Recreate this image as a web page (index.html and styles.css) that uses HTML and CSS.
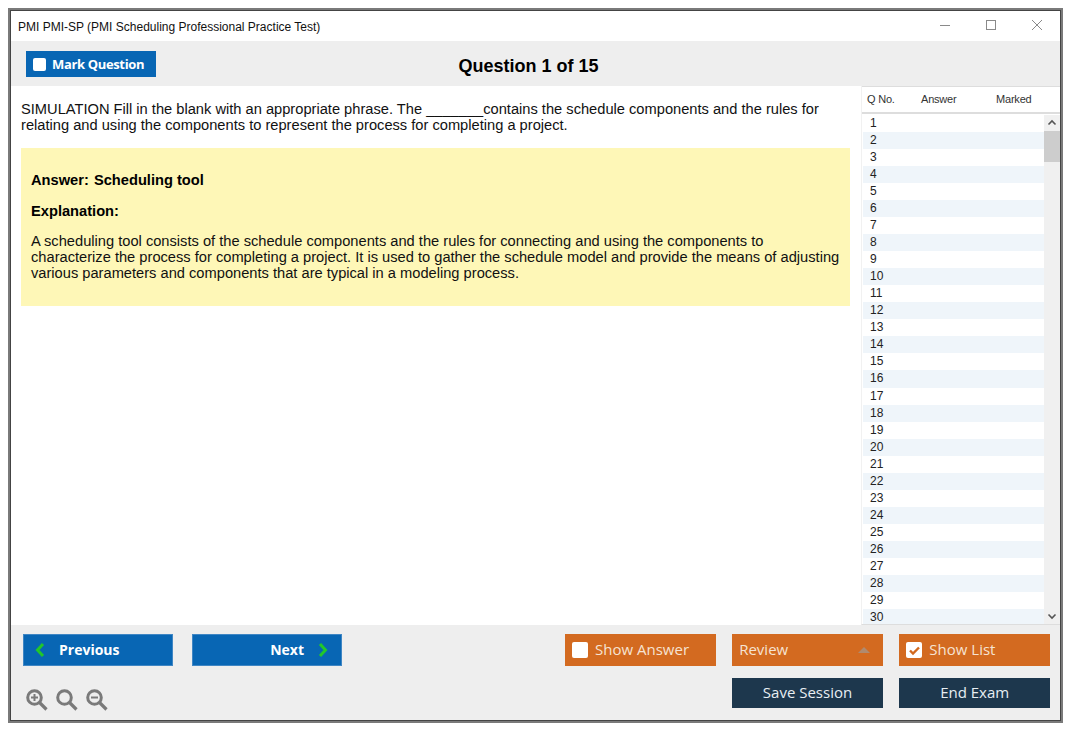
FILE: index.html
```html
<!DOCTYPE html>
<html lang="en">
<head>
<meta charset="utf-8">
<title>PMI PMI-SP</title>
<link rel="stylesheet" href="styles.css">
</head>
<body>
<div class="window">
  <header class="titlebar">
    <span class="title">PMI PMI-SP (PMI Scheduling Professional Practice Test)</span>
    <div class="controls">
      <svg class="ctl" width="12" height="12" viewBox="0 0 12 12"><path d="M1 6.5h10" stroke="#8a8a8a" fill="none"/></svg>
      <svg class="ctl" width="12" height="12" viewBox="0 0 12 12"><rect x="1.5" y="1.5" width="9" height="9" stroke="#8a8a8a" fill="none"/></svg>
      <svg class="ctl" width="12" height="12" viewBox="0 0 12 12"><path d="M1 1l10 10M11 1L1 11" stroke="#8a8a8a" fill="none"/></svg>
    </div>
  </header>
  <div class="toolbar">
    <button class="btn-mark"><span class="box"></span>Mark Question</button>
    <h1 class="qtitle">Question 1 of 15</h1>
  </div>
  <main class="main">
    <section class="content">
      <p class="question">SIMULATION Fill in the blank with an appropriate phrase. The _______contains the schedule components and the rules for relating and using the components to represent the process for completing a project.</p>
      <div class="answer">
        <p class="strong">Answer: <span class="ans-value">Scheduling tool</span></p>
        <p class="strong tight">Explanation:</p>
        <p class="expl">A scheduling tool consists of the schedule components and the rules for connecting and using the components to characterize the process for completing a project. It is used to gather the schedule model and provide the means of adjusting various parameters and components that are typical in a modeling process.</p>
      </div>
    </section>
    <aside class="list">
      <div class="list-head"><span class="c1">Q No.</span><span class="c2">Answer</span><span class="c3">Marked</span></div>
      <div class="list-body">
        <div class="rows">
          <div class="row">1</div><div class="row">2</div><div class="row">3</div><div class="row">4</div><div class="row">5</div>
          <div class="row">6</div><div class="row">7</div><div class="row">8</div><div class="row">9</div><div class="row">10</div>
          <div class="row">11</div><div class="row">12</div><div class="row">13</div><div class="row">14</div><div class="row">15</div>
          <div class="row">16</div><div class="row">17</div><div class="row">18</div><div class="row">19</div><div class="row">20</div>
          <div class="row">21</div><div class="row">22</div><div class="row">23</div><div class="row">24</div><div class="row">25</div>
          <div class="row">26</div><div class="row">27</div><div class="row">28</div><div class="row">29</div><div class="row">30</div>
        </div>
        <div class="scrollbar">
          <svg class="arrow" width="16" height="16" viewBox="0 0 16 16"><path d="M4.5 9.5L8 6l3.5 3.5" stroke="#555" stroke-width="1.6" fill="none"/></svg>
          <div class="thumb"></div>
          <svg class="arrow bottom" width="16" height="16" viewBox="0 0 16 16"><path d="M4.5 6.5L8 10l3.5-3.5" stroke="#555" stroke-width="1.6" fill="none"/></svg>
        </div>
      </div>
    </aside>
  </main>
  <footer class="footer">
    <div class="foot-row">
      <button class="btn blue nav"><svg width="12" height="16" viewBox="0 0 12 16"><path d="M9 2L3.5 8 9 14" stroke="#22c72a" stroke-width="3" fill="none"/></svg><span>Previous</span></button>
      <button class="btn blue nav next"><span>Next</span><svg width="12" height="16" viewBox="0 0 12 16"><path d="M3 2l5.5 6L3 14" stroke="#22c72a" stroke-width="3" fill="none"/></svg></button>
      <div class="right-group">
        <button class="btn orange"><span class="box big"></span>Show Answer</button>
        <button class="btn orange review">Review<span class="caret"></span></button>
        <button class="btn orange"><span class="box big"><svg width="15" height="15" viewBox="0 0 15 15"><path d="M3 7.5l3 3 6-6" stroke="#d2691e" stroke-width="2.4" fill="none"/></svg></span>Show List</button>
      </div>
    </div>
    <div class="foot-row second">
      <div class="zooms">
        <svg width="22" height="22" viewBox="0 0 22 22"><circle cx="8.5" cy="8.5" r="6.8" stroke="#7a7a7a" stroke-width="3" fill="none"/><path d="M13.5 13.5l7 7" stroke="#7a7a7a" stroke-width="3.2" fill="none"/><path d="M5 8.5h7M8.5 5v7" stroke="#7a7a7a" stroke-width="2" fill="none"/></svg>
        <svg width="22" height="22" viewBox="0 0 22 22"><circle cx="8.5" cy="8.5" r="6.8" stroke="#7a7a7a" stroke-width="3" fill="none"/><path d="M13.5 13.5l7 7" stroke="#7a7a7a" stroke-width="3.2" fill="none"/></svg>
        <svg width="22" height="22" viewBox="0 0 22 22"><circle cx="8.5" cy="8.5" r="6.8" stroke="#7a7a7a" stroke-width="3" fill="none"/><path d="M13.5 13.5l7 7" stroke="#7a7a7a" stroke-width="3.2" fill="none"/><path d="M5 8.5h7" stroke="#7a7a7a" stroke-width="2" fill="none"/></svg>
      </div>
      <div class="right-group">
        <button class="btn navy">Save Session</button>
        <button class="btn navy">End Exam</button>
      </div>
    </div>
  </footer>
</div>
</body>
</html>
```
FILE: styles.css
```css
* { box-sizing: border-box; }
html, body { margin: 0; padding: 0; background: #fff; }
body { padding: 8px 12px 12px 8px; height: 735px; overflow: hidden; font-family: "Liberation Sans", Arial, sans-serif; }
button { font-family: "Open Sans", sans-serif; border: 0; padding: 0; cursor: pointer; }
.window { height: 715px; width: 1055px; border: 2px solid #7a7a7a; outline: 1px solid #444; outline-offset: -3px; padding: 1px; display: flex; flex-direction: column; background: #fff; }
.titlebar { height: 30px; flex: none; display: flex; align-items: center; justify-content: space-between; padding-left: 7px; }
.title { font-size: 12px; color: #111; padding-top: 2px; }
.controls { display: flex; gap: 34px; padding: 0 17px 2px 0; }
.toolbar { height: 45px; flex: none; background: #eee; position: relative; padding: 10px 0 0 15px; }
.btn-mark { height: 26px; width: 130px; background: #0866b4; color: #fff; font-size: 13px; font-weight: 700; display: flex; align-items: center; padding-left: 7px; gap: 6px; letter-spacing: -0.35px; }
.box { width: 13px; height: 13px; background: #fff; border-radius: 2px; display: block; }
.box.big { width: 16px; height: 16px; flex: none; }
.box svg { display: block; margin: 0.5px; }
.qtitle { position: absolute; left: 0; right: 14px; top: 14px; margin: 0; text-align: center; font-size: 18px; line-height: 22px; font-weight: 700; color: #000; }
.main { flex: 1; min-height: 0; display: flex; }
.content { flex: 1; padding: 15px 11px 0 10px; min-width: 0; }
.question { margin: 0; font-size: 14.67px; line-height: 16px; color: #111; }
.answer { margin-top: 15px; background: #fef7b7; height: 158px; padding: 24px 10px 0; font-size: 14.67px; line-height: 16px; color: #000; }
.answer p { margin: 0; }
.answer .strong { font-weight: 700; margin-bottom: 15px; }
.answer .strong.tight { margin-bottom: 14px; }
.ans-value { margin-left: 1px; }
.expl { color: #111; }
.list { width: 199px; flex: none; display: flex; flex-direction: column; background: #fff; border-left: 1px solid #f1f1f1; border-bottom: 1px solid #ddd; }
.list-head { height: 28px; flex: none; border-top: 1px solid #ddd; border-bottom: 2px solid #ddd; display: flex; align-items: center; padding-bottom: 2px; font-size: 11px; letter-spacing: -0.2px; color: #333; }
.c1 { margin-left: 5px; width: 54px; }
.c2 { width: 75px; }
.list-body { flex: 1; min-height: 0; display: flex; padding-top: 1px; }
.rows { width: 182px; padding-left: 1px; overflow: hidden; }
.row { height: 17.035px; line-height: 17px; padding-left: 7px; font-size: 12px; color: #222; }
.row:nth-child(even) { background: #eff5fa; }
.scrollbar { width: 16px; background: #f0f0f0; display: flex; flex-direction: column; }
.arrow { flex: none; display: block; }
.arrow.bottom { margin-top: auto; }
.thumb { height: 31px; background: #cdcdcd; }
.footer { height: 95px; flex: none; background: #eee; padding: 9px 10px 0 12px; }
.foot-row { display: flex; align-items: flex-start; }
.foot-row.second { margin-top: 12px; justify-content: space-between; }
.btn { width: 150.67px; height: 32px; color: #fff; font-size: 15px; display: flex; align-items: center; padding-bottom: 2px; }
.blue { background: #0866b4; box-shadow: inset 0 0 0 1px #3f86c4; }
.btn.nav { width: 150px; font-weight: 700; font-size: 14px; padding-left: 11px; gap: 13px; margin-right: 19px; }
.btn.nav.next { justify-content: flex-end; padding: 0 13px 2px 0; margin-right: 0; }
.nav svg { position: relative; top: 1px; }
.right-group { margin-left: auto; display: flex; gap: 16.5px; }
.orange { background: #d36a20; padding-left: 7px; gap: 7px; color: #f6e3d3; }
.review { justify-content: space-between; padding-right: 13px; }
.box.big, .caret { position: relative; top: 1px; }
.caret { width: 0; height: 0; border-left: 6px solid transparent; border-right: 6px solid transparent; border-bottom: 6px solid #b08a6e; }
.navy { background: #1d374d; height: 30px; justify-content: center; color: #e8eef3; }
.zooms { display: flex; gap: 8px; padding: 11px 0 0 3px; }
```
